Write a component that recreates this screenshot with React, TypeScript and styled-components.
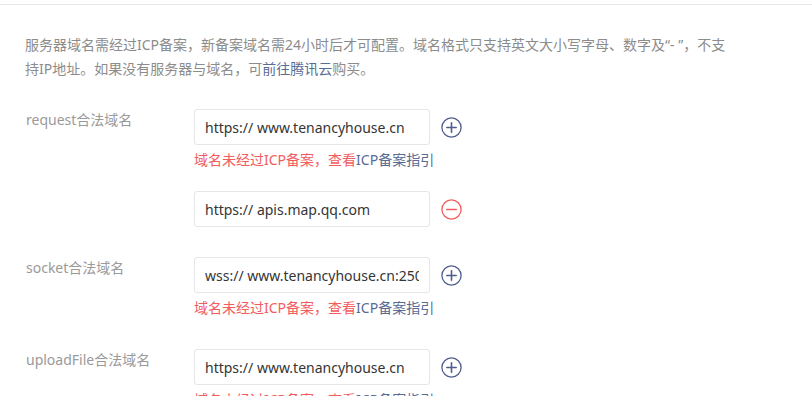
import React from 'react';
import styled, {createGlobalStyle} from 'styled-components';

interface Entry {
    value: string;
    removable?: boolean;
    error?: boolean;
}

interface Field {
    label: string;
    entries: Entry[];
}

const fields: Field[] = [
    {
        label: 'request合法域名',
        entries: [
            {value: 'https:// www.tenancyhouse.cn', error: true},
            {value: 'https:// apis.map.qq.com', removable: true},
        ],
    },
    {
        label: 'socket合法域名',
        entries: [{value: 'wss:// www.tenancyhouse.cn:2500', error: true}],
    },
    {
        label: 'uploadFile合法域名',
        entries: [{value: 'https:// www.tenancyhouse.cn', error: true}],
    },
];

const PlusIcon = () => (
    <svg width='21' height='21' viewBox='0 0 21 21' fill='none'>
        <circle cx='10.5' cy='10.5' r='9.6' stroke='#4f5e8c' strokeWidth='1.3'/>
        <path d='M10.5 5.8v9.4M5.8 10.5h9.4' stroke='#4f5e8c' strokeWidth='1.6' strokeLinecap='round'/>
    </svg>
);

const MinusIcon = () => (
    <svg width='21' height='21' viewBox='0 0 21 21' fill='none'>
        <circle cx='10.5' cy='10.5' r='9.6' stroke='#f25b5b' strokeWidth='1.3'/>
        <path d='M5.8 10.5h9.4' stroke='#f25b5b' strokeWidth='1.6' strokeLinecap='round'/>
    </svg>
);

const App = () => {
    return (
        <>
            <GlobalStyle/>
            <Page>
                <Divider/>
                <Notice>
                    服务器域名需经过ICP备案，新备案域名需24小时后才可配置。域名格式只支持英文大小写字母、数字及“- ”，不支
                    <br/>
                    持IP地址。如果没有服务器与域名，可<Link>前往腾讯云</Link>购买。
                </Notice>
                <Form>
                    {fields.map((field) => (
                        <FieldRow key={field.label}>
                            <Label>{field.label}</Label>
                            <Entries>
                                {field.entries.map((entry) => (
                                    <div key={entry.value}>
                                        <EntryRow>
                                            <DomainInput value={entry.value} readOnly/>
                                            <IconButton>
                                                {entry.removable ? <MinusIcon/> : <PlusIcon/>}
                                            </IconButton>
                                        </EntryRow>
                                        {entry.error && (
                                            <ErrorTip>
                                                域名未经过ICP备案，查看<Link>ICP备案指引</Link>
                                            </ErrorTip>
                                        )}
                                    </div>
                                ))}
                            </Entries>
                        </FieldRow>
                    ))}
                </Form>
            </Page>
        </>
    );
};

const GlobalStyle = createGlobalStyle`
  body {
    margin: 0;
    background: #ffffff;
    font-family: "Noto Sans", "Noto Sans CJK SC", sans-serif;
  }
`;

const Page = styled.div`
  height: 396px;
  padding-top: 4px;
  box-sizing: border-box;
  overflow: hidden;
`;

const Divider = styled.div`
  height: 1px;
  background-color: #e3e6eb;
`;

const Notice = styled.p`
  margin: 0;
  padding: 28px 25px 0;
  font-size: 14px;
  line-height: 24px;
  color: #8c8c8c;
  white-space: nowrap;
`;

const Link = styled.span`
  color: #576b95;
  cursor: pointer;
`;

const Form = styled.div`
  margin-top: 28px;
  padding-left: 26px;
  display: flex;
  flex-direction: column;
  gap: 30px;
`;

const FieldRow = styled.div`
  display: grid;
  grid-template-columns: 168px 1fr;
`;

const Label = styled.div`
  font-size: 14px;
  line-height: 22px;
  color: #9a9a9a;
`;

const Entries = styled.div`
  display: flex;
  flex-direction: column;
  gap: 20px;
`;

const EntryRow = styled.div`
  display: flex;
  align-items: center;
  gap: 11px;
`;

const DomainInput = styled.input`
  width: 236px;
  height: 36px;
  box-sizing: border-box;
  padding: 0 10px;
  border: 1px solid #e5e6e8;
  border-radius: 3px;
  font-family: "Noto Sans", "Noto Sans CJK SC", sans-serif;
  font-size: 14px;
  color: #353535;
  background: #ffffff;
  outline: none;
`;

const IconButton = styled.div`
  width: 21px;
  height: 21px;
  display: flex;
  cursor: pointer;
`;

const ErrorTip = styled.div`
  padding-top: 4px;
  font-size: 14px;
  line-height: 22px;
  color: #f25c5e;
`;

export default App;
